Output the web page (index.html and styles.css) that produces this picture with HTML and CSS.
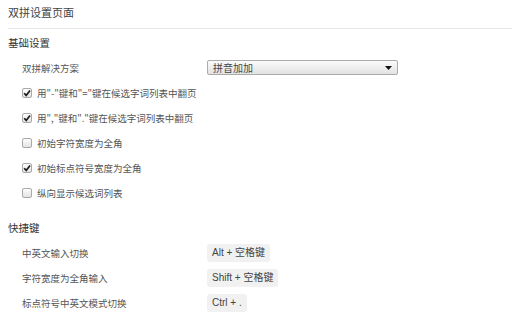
FILE: index.html
```html
<!DOCTYPE html>
<html lang="zh-CN">
<head>
<meta charset="utf-8">
<title>双拼设置页面</title>
<link rel="stylesheet" href="styles.css">
</head>
<body>
<div class="header">双拼设置页面</div>

<section class="section">
  <div class="section-title">基础设置</div>
  <div class="rows">
    <div class="row">
      <span class="label">双拼解决方案</span>
      <div class="select">
        <span>拼音加加</span>
        <svg class="arrow" width="7" height="4" viewBox="0 0 7 4"><path d="M0 0H7L3.5 4Z" fill="#111"/></svg>
      </div>
    </div>
    <label class="row check-row">
      <span class="box checked"><svg width="10" height="10" viewBox="0 0 10 10"><path d="M2.2 5.2L4.2 7.4L8 2.4" fill="none" stroke="#1a1a1a" stroke-width="1.7"/></svg></span>
      <span>用"-"键和"="键在候选字词列表中翻页</span>
    </label>
    <label class="row check-row">
      <span class="box checked"><svg width="10" height="10" viewBox="0 0 10 10"><path d="M2.2 5.2L4.2 7.4L8 2.4" fill="none" stroke="#1a1a1a" stroke-width="1.7"/></svg></span>
      <span>用","键和"."键在候选字词列表中翻页</span>
    </label>
    <label class="row check-row">
      <span class="box"></span>
      <span>初始字符宽度为全角</span>
    </label>
    <label class="row check-row">
      <span class="box checked"><svg width="10" height="10" viewBox="0 0 10 10"><path d="M2.2 5.2L4.2 7.4L8 2.4" fill="none" stroke="#1a1a1a" stroke-width="1.7"/></svg></span>
      <span>初始标点符号宽度为全角</span>
    </label>
    <label class="row check-row">
      <span class="box"></span>
      <span>纵向显示候选词列表</span>
    </label>
  </div>
</section>

<section class="section section-keys">
  <div class="section-title">快捷键</div>
  <div class="rows">
    <div class="row">
      <span class="label">中英文输入切换</span>
      <span class="key">Alt + 空格键</span>
    </div>
    <div class="row">
      <span class="label">字符宽度为全角输入</span>
      <span class="key">Shift + 空格键</span>
    </div>
    <div class="row">
      <span class="label">标点符号中英文模式切换</span>
      <span class="key">Ctrl + .</span>
    </div>
  </div>
</section>
</body>
</html>
```

FILE: styles.css
```css
html, body {
  margin: 0;
  padding: 0;
  background: #ffffff;
}

body {
  font-family: "Noto Sans CJK SC", "Noto Sans", "Liberation Sans", sans-serif;
  font-size: 9.5px;
  color: #555555;
}

.header {
  margin-left: 8px;
  height: 28px;
  line-height: 24px;
  font-size: 11px;
  color: #444444;
  border-bottom: 1px solid #e6e6e6;
}

.section {
  padding-left: 8px;
}

.section-keys {
  margin-top: 9px;
}

.section-title {
  padding-top: 4px;
  line-height: 20px;
  font-size: 10.5px;
  color: #333333;
}

.rows {
  padding-top: 2px;
  padding-left: 14px;
}

.row {
  display: flex;
  align-items: center;
  height: 25px;
}

.label {
  width: 185px;
  flex: none;
}

.select {
  display: flex;
  align-items: center;
  justify-content: space-between;
  box-sizing: border-box;
  width: 191px;
  height: 15px;
  padding: 0 5px 0 5px;
  border: 1px solid #ababab;
  border-radius: 2px;
  background: linear-gradient(#fbfbfb, #e2e2e2);
  color: #444444;
  font-size: 10px;
  line-height: 13px;
}

.arrow {
  display: block;
}

.check-row {
  gap: 5px;
}

.box {
  box-sizing: border-box;
  width: 10px;
  height: 10px;
  flex: none;
  border: 1px solid #a9a9a9;
  border-radius: 2px;
  background: linear-gradient(#fdfdfd, #e3e3e3);
  position: relative;
}

.box svg {
  position: absolute;
  left: -1px;
  top: -1px;
}

.key {
  display: inline-block;
  height: 18px;
  line-height: 18px;
  padding: 0 5px;
  background: #f1f1f1;
  border-radius: 3px;
  color: #444444;
  font-size: 10px;
  font-family: "Liberation Sans", "Noto Sans CJK SC", sans-serif;
}
```
